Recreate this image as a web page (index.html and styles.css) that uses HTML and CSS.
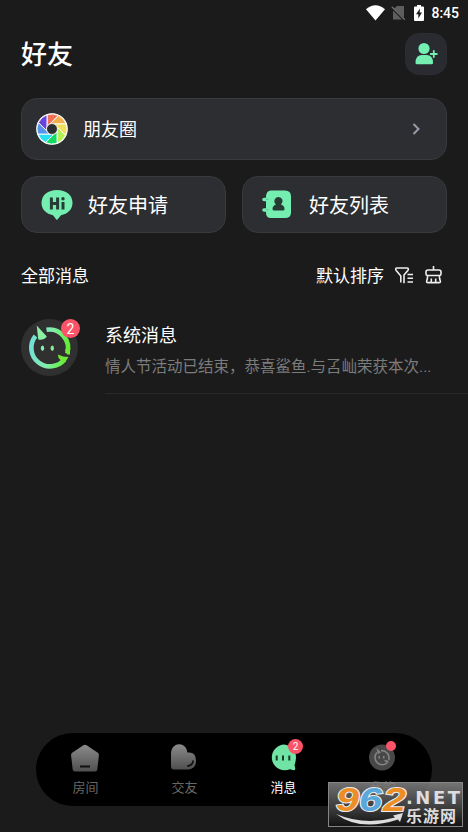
FILE: index.html
```html
<!DOCTYPE html>
<html lang="zh-CN">
<head>
<meta charset="utf-8">
<title>好友</title>
<link rel="stylesheet" href="styles.css">
</head>
<body>
<div class="app">
  <div class="statusbar">
    <svg class="wifi" width="19" height="16" viewBox="0 0 19 16"><path fill="#fff" d="M0 4.200Q9.500-3.800 19 4.200L9.500 15.500z"/></svg>
    <svg class="nosim" width="15" height="16" viewBox="0 0 15 16"><path fill="#5e5e5e" d="M6 1h7v11.500L3 3.800zM2 5.500L11 14.500H2z"/><path d="M.8 1.800l13 13" stroke="#6d6d6d" stroke-width="1.400"/></svg>
    <svg class="battery" width="10" height="16" viewBox="0 0 10 16"><path fill="#fff" d="M3 0h4v1.500h2q1 0 1 1V15q0 1-1 1H1q-1 0-1-1V2.500q0-1 1-1h2z"/><path fill="#1b1b1b" d="M6 3.500L2 9.300h2.300V13.500L8 7.600H5.700z"/></svg>
    <span class="clock">8:45</span>
  </div>

  <header class="header">
    <h1>好友</h1>
    <button class="add" aria-label="添加好友">
      <svg width="24" height="24" viewBox="0 0 24 24" fill="#74efb1"><circle cx="10" cy="6.500" r="5.600"/><path d="M1.500 21q0-8 6.500-8h4.500q6.500 0 6.500 8 0 1.200-1.500 1.200H3q-1.500 0-1.500-1.200z"/><path d="M19.800 9v6M16.800 12h6" stroke="#74efb1" stroke-width="1.800" stroke-linecap="round"/></svg>
    </button>
  </header>

  <section class="cards">
    <a class="card wide">
      <svg width="32" height="32" viewBox="-16 -16 32 32">
        <defs><path id="blade" d="M-5-14.200A15.050 15.050 0 016.500-13.570L-1.400-5.700-5-3z"/></defs>
        <circle r="15.800" fill="#fff"/>
        <g stroke="#fff" stroke-width=".9">
          <use href="#blade" fill="#ef7158"/>
          <use href="#blade" fill="#f1b04f" transform="rotate(45)"/>
          <use href="#blade" fill="#f2df5c" transform="rotate(90)"/>
          <use href="#blade" fill="#b5ef56" transform="rotate(135)"/>
          <use href="#blade" fill="#10dc64" transform="rotate(180)"/>
          <use href="#blade" fill="#28dff2" transform="rotate(225)"/>
          <use href="#blade" fill="#5794e9" transform="rotate(270)"/>
          <use href="#blade" fill="#6a42dc" transform="rotate(315)"/>
        </g>
        <circle r="5.400" fill="#2d2e32" stroke="#fff" stroke-width=".6"/>
      </svg>
      <span>朋友圈</span>
      <svg class="chevron" width="8" height="12" viewBox="0 0 8 12"><path d="M1.500 1l5 5-5 5" fill="none" stroke="#9a99aa" stroke-width="2"/></svg>
    </a>
    <a class="card">
      <svg width="32" height="30" viewBox="0 0 32 30"><path fill="#74efb1" d="M16 0C25 0 31.500 5 31.500 13c0 6.500-5 11-11.500 12.200L16.500 29.500q-.6.700-1.200 0L12 25.200C5.500 24 .5 19.500.5 13 .5 5 7 0 16 0z"/><path d="M10.400 7.500v12M16.600 7.500v12M10.400 13.500h6.200M22 12v7.500" stroke="#263b33" stroke-width="3"/><circle cx="22" cy="8.800" r="1.700" fill="#263b33"/></svg>
      <span>好友申请</span>
    </a>
    <a class="card">
      <svg width="32" height="30" viewBox="1 0 32 30"><path fill="#74efb1" d="M10 .5h14q6 0 6 6v16q0 5.500-6 5.500H10q-5 0-5-5v-1.300H3a1.500 1.500 0 010-3.500h2v-7H3a1.500 1.500 0 010-3.500h2Q5 .5 10 .5z"/><path d="M5 9.200h2.500M5 19.700h2.500" stroke="#58af84" stroke-width=".8"/><path fill="#263b33" d="M17.500 7a4.200 4.200 0 012.500 7.500q3.500 1 3.500 4.500 0 1.500-1.500 1.500h-9q-1.500 0-1.500-1.500 0-3.500 3.500-4.500A4.200 4.200 0 0117.500 7z"/></svg>
      <span>好友列表</span>
    </a>
  </section>

  <div class="filter">
    <span class="all">全部消息</span>
    <span>默认排序</span>
    <svg class="funnel" width="19" height="17" viewBox="0 0 19 17" fill="none" stroke="#eee" stroke-width="1.600"><path d="M5.800 15.500V9L1.200 3.500Q-.2 1 2 1h10q2.200 0 .8 2.500L9 8v8.200"/><path d="M12.500 7.500H18M12.500 11.300H18M12.500 15H18"/></svg>
    <svg class="broom" width="17" height="18" viewBox="0 0 17 18" fill="none" stroke="#eee" stroke-width="1.600"><path d="M8.500 0v4M3 4h11q2 0 2 2v2q0 1.500-1.600 1.500H2.600Q1 9.500 1 8V6q0-2 2-2zM2.600 9.500Q2.600 13 1.700 15q-.5 1.600 1.300 1.600h11q1.800 0 1.300-1.600-.9-2-.9-5.500M6.300 12.500v4M10.700 12.500v4"/></svg>
  </div>

  <article class="message">
    <div class="avatar">
      <svg width="57" height="57" viewBox="0 0 57 57">
        <defs><linearGradient id="mint" gradientUnits="userSpaceOnUse" x1="8" x2="49" y1="25" y2="33"><stop stop-color="#72ded8"/><stop offset=".5" stop-color="#83edaa"/><stop offset="1" stop-color="#59ef22"/></linearGradient></defs>
        <g fill="none" stroke="url(#mint)" stroke-width="4.600"><path d="M14.500 17A18.500 18.500 0 1043.500 40.500"/><path d="M25.500 10.800A18.500 18.500 0 0146.200 34.500"/></g>
        <path fill="#73e735" d="M37 35.500q5 2.500 10.500 2.500l-3.500 5.500-3-1.500q-4-2-4-6.500zM44 30h5v5.500h-3z"/>
        <path fill="#8af0a4" d="M15.700 6.500L25.800 17.500q-3 4-8.500 3z"/>
        <ellipse cx="21.500" cy="29.300" rx="1.700" ry="2.700" fill="#83edb2"/><ellipse cx="31.300" cy="29.300" rx="1.700" ry="2.700" fill="#83ed92"/>
      </svg>
      <b class="badge">2</b>
    </div>
    <div class="body">
      <h2>系统消息</h2>
      <p>情人节活动已结束，恭喜鲨鱼.与叾屾荣获本次...</p>
    </div>
  </article>

  <nav class="tabs">
    <a class="tab">
      <svg width="30" height="30" viewBox="0 0 30 30"><defs><linearGradient id="gray" x1="0" x2="0" y1="0" y2="1"><stop stop-color="#8b8b8b"/><stop offset="1" stop-color="#505050"/></linearGradient></defs><path fill="url(#gray)" d="M13 2.500q2-1.500 4 0l10.500 7q1.700 1 1.400 3L27.300 26.500q-.3 2-2.300 2H5q-2 0-2.300-2L1.100 12.500q-.3-2 1.400-3z"/><path d="M10 23.500h10" stroke="#111" stroke-width="2"/></svg>
      <span>房间</span>
    </a>
    <a class="tab">
      <svg width="30" height="30" viewBox="0 0 30 30"><path fill="url(#gray)" d="M2 9.500a8.200 8.200 0 0116.400 0Q27 8.500 27 17.800C27 24 23 26.500 18.500 26.500H5q-3 0-3-3z"/><path d="M24.200 17.500q-.5 5-6 5.600" fill="none" stroke="#111" stroke-width="1.800"/></svg>
      <span>交友</span>
    </a>
    <a class="tab active">
      <svg width="30" height="30" viewBox="0 0 30 30"><path fill="#70e3a5" d="M15 1.500a13 13 0 0113 13q-.3 5-1.500 7.500l.8 3.500q.2 2-1.800 1.700l-3.500-.9a13 13 0 11-7-24.800z"/><path d="M8.700 12.500v5M15 12.500v5M21.300 12.500v5" stroke="#173a29" stroke-width="2"/></svg>
      <b class="badge small">2</b>
      <span>消息</span>
    </a>
    <a class="tab">
      <svg width="30" height="30" viewBox="0 0 30 30"><circle cx="15" cy="14.500" r="13" fill="#484848"/><g fill="none" stroke="#858585" stroke-width="1.600"><path d="M10 9.500a7.200 7.200 0 1010.500 10M14 7.700a7.200 7.200 0 017.700 9.300M17.500 17.500l4 1.200"/></g><path fill="#858585" d="M9.500 5l4.500 4.500-3 1.500zM11.500 13H13v2.500h-1.500zM16 13h1.500v2.500H16z"/></svg>
      <i class="dot"></i>
      <span>我的</span>
    </a>
  </nav>

  <div class="watermark">
    <svg width="136" height="46" viewBox="0 0 136 46">
      <defs><linearGradient id="plate" x1="0" x2="0" y1="0" y2="1"><stop stop-color="#858585" stop-opacity=".85"/><stop offset="1" stop-color="#111" stop-opacity=".88"/></linearGradient></defs>
      <rect x=".5" y=".5" width="134" height="44" fill="url(#plate)" stroke="#858585"/>
      <path fill="#ddd" d="M8 32Q37 44 67 35.500L65 33.500 75 31 72 40 70 37.500Q32 50 8 32z"/>
      <g class="numbers"><text x="8" y="29" fill="#ec8d25" textLength="23" lengthAdjust="spacingAndGlyphs">9</text><text x="31" y="29" fill="#5aa7db" textLength="23" lengthAdjust="spacingAndGlyphs">6</text><text x="55" y="29" fill="#ec8d25" textLength="23" lengthAdjust="spacingAndGlyphs">2</text></g>
      <text class="domain" x="78" y="22" textLength="54">.NET</text>
      <text class="site" x="78" y="40" textLength="50">乐游网</text>
    </svg>
  </div>
</div>
</body>
</html>
```
FILE: styles.css
```css
* { box-sizing: border-box; }
body { margin: 0; background: #1b1b1b; color: #fff; font-family: Roboto, "Noto Sans CJK SC", sans-serif; }
.app { position: relative; height: 832px; overflow: hidden; display: flex; flex-direction: column; }
svg { display: block; flex: none; }
h1, h2, p { margin: 0; font-weight: 400; }
.statusbar { height: 26px; padding: 0 9px 0 0; display: flex; justify-content: flex-end; align-items: center; }
.nosim { margin-left: 6px; }
.battery { margin-left: 8px; }
.clock { margin-left: 7px; font-size: 14px; font-weight: 500; line-height: 26px; }
.header { height: 55px; padding: 0 21px; display: flex; justify-content: space-between; align-items: center; }
h1 { margin-bottom: 2px; font-size: 26px; font-weight: 500; }
.add { width: 42px; height: 42px; padding: 0; border: 1px solid #2c2d32; border-radius: 14px; background: #2a2b30; display: grid; place-items: center; }
.cards { margin: 17px 21px 0; display: grid; grid-template-columns: 205px 205px; grid-template-rows: 62px 57px; gap: 16px; }
.card { display: flex; align-items: center; padding-left: 19px; border: 1px solid #393a3c; border-radius: 16px; background: #2d2e32; font-size: 20px; }
.card span { margin-left: 15px; padding-top: 2px; line-height: 28px; }
.card.wide { grid-column: 1 / 3; padding: 0 26px 0 14px; font-size: 18px; }
.chevron { margin-left: auto; }
.filter { height: 30px; margin: 27px 26px 0 21px; display: flex; align-items: center; font-size: 17px; }
.filter span { margin-bottom: 2px; }
.all { margin-right: auto; }
.funnel { margin-left: 11px; }
.broom { margin-left: 11px; }
.message { height: 104px; margin-left: 21px; display: flex; }
.avatar { position: relative; width: 57px; height: 57px; margin-top: 29px; border-radius: 50%; background: #303030; flex: none; }
.badge { position: absolute; right: -2px; top: 0; width: 19px; height: 19px; border-radius: 50%; background: #fb5469; font-size: 14px; line-height: 20px; text-align: center; font-weight: 400; }
.body { flex: 1; margin-left: 27px; padding-top: 32px; border-bottom: 1px solid #282828; white-space: nowrap; }
h2 { font-size: 18px; line-height: 28px; }
p { margin-top: 5px; color: #7c7c7c; font-size: 15.5px; line-height: 24px; }
.tabs { width: 396px; height: 73px; margin: auto 0 26px 36px; padding-top: 10px; border-radius: 37px; background: #000; display: grid; grid-template-columns: repeat(4, 1fr); }
.tab { position: relative; display: flex; flex-direction: column; align-items: center; color: #686868; font-size: 13px; line-height: 20px; }
.tab svg { margin-left: -1px; }
.tab span { margin-top: 5px; }
.active { color: #fff; }
.badge.small { width: 15px; height: 15px; right: 30px; top: -4px; font-size: 10px; line-height: 15px; }
.dot { position: absolute; right: 36px; top: -2px; width: 10px; height: 10px; border-radius: 50%; background: #fb5469; }
.watermark { position: absolute; left: 328px; top: 782px; }
.numbers text { font: italic 700 34px "Liberation Sans", sans-serif; stroke: #eee; stroke-width: 2px; paint-order: stroke; }
.domain { font: 700 18px "DejaVu Sans", sans-serif; fill: #ddd; }
.site { font: 700 16px "Noto Sans CJK SC", sans-serif; fill: #ddd; }
```
